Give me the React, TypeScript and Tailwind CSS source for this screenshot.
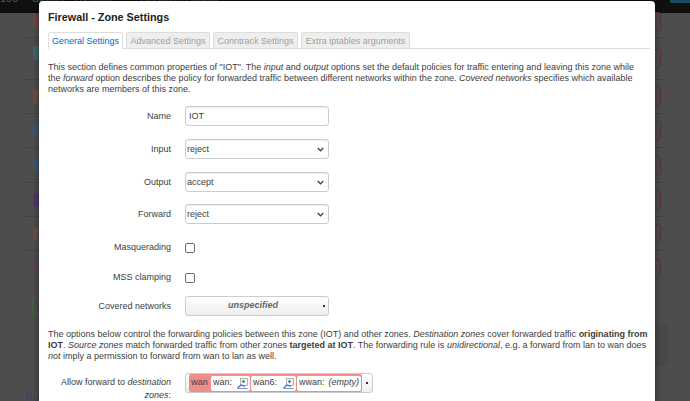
const font = { fontFamily: '"Liberation Sans", Arial, sans-serif' };

function PageRow({ color, hasLine = true, h, badge = '' }: { color: string; hasLine?: boolean; h: string; badge?: string }) {
  return (
    <div className={`flex items-center justify-between ${h} ${hasLine ? 'border-b border-[#424242]' : ''} mx-[25px]`}>
      <div className={`ml-[8px] w-[12px] h-[14px] rounded-[3px] ${color} ${badge}`} />
      <div className="w-[18px] h-[19px] rounded-[3px] border border-[#5e3338] mr-[4px]" />
    </div>
  );
}

function NetIcon() {
  return (
    <svg width="11" height="11" viewBox="0 0 11 11" className="shrink-0">
      <rect x="3.5" y="0.5" width="7" height="7" fill="#f2f2f2" stroke="#999" strokeWidth="0.7" />
      <rect x="5.5" y="2.5" width="2" height="2" fill="#333" />
      <path d="M0.5 10 L4 7 L8 8.5" stroke="#3e6fb5" strokeWidth="1.2" fill="none" />
      <path d="M0.5 10.5 H10.5" stroke="#6f97d2" strokeWidth="1" />
    </svg>
  );
}

function Row({ label, children, mb, labelTop = false }: { label: React.ReactNode; children: React.ReactNode; mb: string; labelTop?: boolean }) {
  return (
    <div className={`flex ${labelTop ? 'items-start' : 'items-center'} ${mb}`}>
      <div className={`w-[123px] mr-[14px] text-right text-[#404040] leading-[13px] ${labelTop ? 'mt-[3px]' : ''}`}>{label}</div>
      {children}
    </div>
  );
}

function Select({ value }: { value: string }) {
  return (
    <div className="relative w-[144px] h-[20px]">
      <select
        defaultValue={value}
        className="appearance-none w-full h-full pl-[1px] pt-[2px] bg-white border border-[#cccccc] rounded-[3px] text-[#404040] text-[9px] shadow-[inset_0_1px_1px_rgba(0,0,0,0.075)]"
        style={font}
      >
        <option>{value}</option>
      </select>
      <svg width="7" height="5" viewBox="0 0 7 5" className="absolute right-[5px] top-[8px] pointer-events-none">
        <path d="M0.8 1 L3.5 3.8 L6.2 1" stroke="#333" strokeWidth="1.2" fill="none" />
      </svg>
    </div>
  );
}

function Check() {
  return <div className="w-[10px] h-[10px] border border-[#6b6b78] rounded-[2px] bg-white" />;
}

function Tab({ children, active = false, w }: { children: React.ReactNode; active?: boolean; w: string }) {
  return (
    <div
      className={
        active
          ? `${w} h-[17px] text-center border border-b-0 border-[#dddddd] rounded-t-[3px] bg-white text-[#0069d6] leading-[17px] relative z-10`
          : `${w} h-[16px] text-center border border-b-0 border-[#dddddd] rounded-t-[3px] bg-[#eeeeee] text-[#a0a0a0] leading-[16px]`
      }
    >
      {children}
    </div>
  );
}

function Zone({ children, w }: { children: React.ReactNode; w: string }) {
  return (
    <div className={`${w} h-[15px] flex items-center justify-between px-[2px] bg-white rounded-[2px] whitespace-nowrap text-[#404040]`}>{children}</div>
  );
}

export default function App() {
  return (
    <div className="relative w-[690px] h-[401px] overflow-hidden bg-[#4d4d4d]" style={font}>
      <div className="h-[13px] bg-[#101010] flex items-start justify-between overflow-hidden">
        <div className="flex -mt-[8px] text-[11px] leading-[12px] text-[#555555] whitespace-nowrap">
          <span className="w-[32px]">100</span>
          <span className="w-[43px]">Status</span>
          <span className="w-[65px]">System</span>
          <span className="w-[45px]">Services</span>
          <span>Logout</span>
        </div>
        <span className="w-[20px] h-[3px] bg-[#1c4a63]" />
      </div>
      <div>
        <PageRow h="h-[25px] pb-[8px]" color="bg-[#6f4444]" />
        <PageRow h="h-[42px]" color="bg-[#3f6468]" badge="-translate-y-[6px]" />
        <PageRow h="h-[34px]" color="bg-[#6a5044]" />
        <PageRow h="h-[34px]" color="bg-[#3c566f]" />
        <PageRow h="h-[35px]" color="bg-[#3c566f]" />
        <PageRow h="h-[34px]" color="bg-[#53376f]" />
        <PageRow h="h-[34px]" color="bg-[#6a5044]" />
        <PageRow h="h-[34px]" color="bg-[#5a4456]" hasLine={false} />
      </div>
      <div className="ml-[32px] mt-[12px] h-[19px] w-[12px] border border-[#3c6b3c] rounded-[3px]" />
      <div className="flex justify-end mt-[7px] mr-[22px]">
        <div className="w-[13px] h-[43px] bg-[#484848]" />
      </div>
      <div className="mx-[25px] mt-[13px] border-t border-[#484848] pt-[11px] text-[11px] text-[#2c4a6b] leading-[12px]">Powered by</div>

      <div className="absolute left-[39px] top-[1px] w-[616px] h-[410px] bg-white rounded-[4px] pl-[9px] pr-[5px] pt-[9px] text-[9px] text-[#404040] shadow-[0_0_6px_rgba(0,0,0,0.5)]">
        <h3 className="text-[10.8px] font-bold leading-[14px] text-[#222222]">Firewall - Zone Settings</h3>
        <div className="flex gap-[3px] border-b border-[#dddddd] h-[17px] mt-[8px] mb-[13px]">
          <Tab active w="w-[75px]">General Settings</Tab>
          <Tab w="w-[84px]">Advanced Settings</Tab>
          <Tab w="w-[85px]">Conntrack Settings</Tab>
          <Tab w="w-[109px]">Extra iptables arguments</Tab>
        </div>
        <p className="leading-[11px] mb-[11px] pr-[6px]">
          This section defines common properties of "IOT". The <em>input</em> and <em>output</em> options set the default policies for traffic entering and leaving this zone while the <em>forward</em> option describes the policy for forwarded traffic between different networks within the zone. <em>Covered networks</em> specifies which available networks are members of this zone.
        </p>
        <Row label="Name" mb="mb-[13px]">
          <input
            defaultValue="IOT"
            className="w-[144px] h-[20px] px-[3px] bg-white border border-[#cccccc] rounded-[3px] text-[#404040] text-[9px] shadow-[inset_0_1px_1px_rgba(0,0,0,0.075)]"
            style={font}
          />
        </Row>
        <Row label="Input" mb="mb-[13px]"><Select value="reject" /></Row>
        <Row label="Output" mb="mb-[12px]"><Select value="accept" /></Row>
        <Row label="Forward" mb="mb-[17px]"><Select value="reject" /></Row>
        <Row label="Masquerading" mb="mb-[17px]"><Check /></Row>
        <Row label="MSS clamping" mb="mb-[12px]"><Check /></Row>
        <Row label="Covered networks" mb="mb-[13px]">
          <div className="relative w-[144px] h-[20px] pr-[8px] border border-[#cccccc] rounded-[3px] bg-gradient-to-b from-white to-[#eeeeee] flex items-center justify-center text-[#666666] italic font-bold">
            unspecified
            <span className="absolute right-[3px] top-[8px] w-[2px] h-[2px] bg-[#333]" />
          </div>
        </Row>
        <p className="leading-[11px] mb-[11px]">
          The options below control the forwarding policies between this zone (IOT) and other zones. <em>Destination zones</em> cover forwarded traffic <strong>originating from IOT</strong>. <em>Source zones</em> match forwarded traffic from other zones <strong>targeted at IOT</strong>. The forwarding rule is <em>unidirectional</em>, e.g. a forward from lan to wan does <em>not</em> imply a permission to forward from wan to lan as well.
        </p>
        <Row label={<>Allow forward to <em>destination</em> <em>zones</em>:</>} mb="mb-0" labelTop>
          <div className="flex items-center h-[20px] w-[188px] pl-[3px] border border-[#cccccc] rounded-[3px] bg-gradient-to-b from-white to-[#eeeeee]">
            <div className="flex items-center w-[173px] h-[18px] bg-[#f08c8c] pr-[1px] gap-[1px] rounded-[2px]">
              <span className="w-[21px] text-center text-[#404040]">wan</span>
              <Zone w="w-[39px]">wan: <NetIcon /></Zone>
              <Zone w="w-[45px]">wan6: <NetIcon /></Zone>
              <Zone w="w-[64px]"><span>wwan:</span> <em>(empty)</em></Zone>
            </div>
            <span className="ml-[4px] w-[2px] h-[2px] bg-[#333]" />
          </div>
        </Row>
      </div>
    </div>
  );
}
